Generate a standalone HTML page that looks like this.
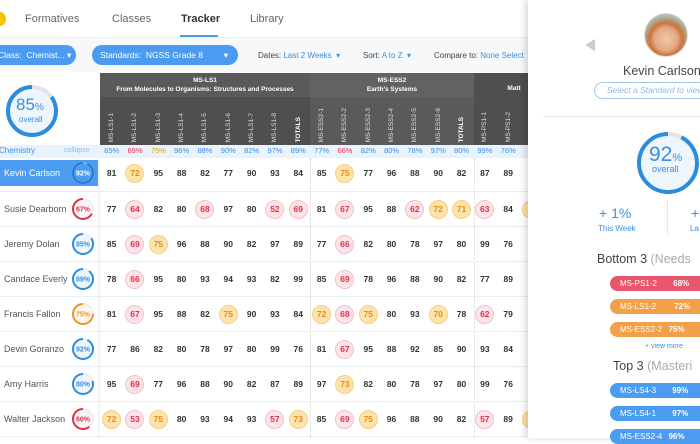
<!DOCTYPE html>
<html><head><meta charset="utf-8"><style>
*{margin:0;padding:0;box-sizing:border-box}
body{width:700px;height:438px;overflow:hidden;background:#fff;font-family:"Liberation Sans",sans-serif;position:relative;color:#333}
.a{position:absolute}
.nav span{position:absolute;top:13px;font-size:11px;color:#666}
.pill{position:absolute;top:45px;height:20px;border-radius:10px;background:#4b9cf0;color:#fff;font-size:8.5px;line-height:20px;padding-left:8px}
.ft{position:absolute;top:51px;font-size:8px;color:#444}
.ft b{font-weight:normal;color:#3a8fe0}
.row{position:absolute;left:100px;display:flex;height:20px;align-items:center}
.row i{font-style:normal;width:23.33px;text-align:center;font-size:8.5px;font-weight:bold;color:#333;display:flex;justify-content:center;align-items:center;height:20px}
.row i.r,.row i.o{width:19px;height:19px;border-radius:50%;margin:0 2.16px;font-size:8.5px}
.row i.r{background:#fde4e8;border:1.5px solid #f5bfc8;color:#e0304a}
.row i.o{background:#fde3ac;border:1.5px solid #f8cf7e;color:#ee8a18}
.pct{position:absolute;left:100px;top:146px;display:flex}
.pct i{font-style:normal;width:23.33px;text-align:center;font-size:7.5px;color:#3a8fe0}
.nm{position:absolute;left:4px;font-size:9px;color:#555}
.vl{position:absolute;top:100px;height:42px;width:23.33px;display:flex;justify-content:center;align-items:flex-end}
.vl span{writing-mode:vertical-rl;transform:rotate(180deg);font-size:6.5px;color:#ddd}
.hl{position:absolute;left:0;width:528px;height:1px;background:#e8eef5}
.bar{position:absolute;left:610px;width:100px;height:15px;border-radius:8px;color:#fff;font-size:8px;line-height:15px;padding-left:10px}
.bar b{margin-left:14px}
</style></head><body>
<!-- nav -->
<div class="a" style="left:-6px;top:12px;width:12px;height:14px;border-radius:50%;background:#f6c400"></div>
<div class="nav"><span style="left:25px">Formatives</span><span style="left:112px">Classes</span><span style="left:181px;color:#333;font-weight:bold">Tracker</span><span style="left:250px">Library</span></div>
<div class="a" style="left:180px;top:35px;width:38px;height:2px;background:#4b9cf0"></div>
<div class="a" style="left:0;top:37px;width:528px;height:1px;background:#eee"></div>
<div class="a" style="left:0;top:38px;width:528px;height:34px;background:#f7f8fa"></div>
<div class="pill" style="left:-10px;width:86px">Class: &nbsp;Chemist... ▾</div>
<div class="pill" style="left:92px;width:146px">Standards: &nbsp;NGSS Grade 8 <span style="position:absolute;right:10px">▾</span></div>
<div class="ft" style="left:258px">Dates: <b>Last 2 Weeks &nbsp;▾</b></div>
<div class="ft" style="left:363px">Sort: <b>A to Z &nbsp;▾</b></div>
<div class="ft" style="left:434px">Compare to: <b>None Select</b></div>
<!-- left big ring -->
<svg class="a" style="left:5px;top:84px" width="54" height="54"><circle cx="27" cy="27" r="24" fill="#eef5fd" stroke="#e4e4e4" stroke-width="4"/><circle cx="27" cy="27" r="24" fill="none" stroke="#2a8de0" stroke-width="4" stroke-dasharray="128 151" transform="rotate(-90 27 27) scale(1,-1) translate(0,-54)"/></svg>
<div class="a" style="left:16px;top:95px;font-size:17px;color:#3a8fe0">85<span style="font-size:10px">%</span></div>
<div class="a" style="left:19px;top:115px;font-size:8px;color:#3a8fe0">overall</div>
<!-- header -->
<div class="a" style="left:100px;top:73px;width:210px;height:72px;background:#4f4f4f"></div>
<div class="a" style="left:100px;top:73px;width:210px;height:24px;background:#5a5a5a"></div>
<div class="a" style="left:310px;top:73px;width:164px;height:72px;background:#5a5a5a"></div>
<div class="a" style="left:310px;top:73px;width:164px;height:24px;background:#626262"></div>
<div class="a" style="left:474px;top:73px;width:54px;height:72px;background:#4f4f4f"></div>
<div class="a" style="left:100px;top:76px;width:210px;text-align:center;color:#fff;font-size:6.5px;font-weight:bold;line-height:9px">MS-LS1<br>From Molecules to Organisms: Structures and Processes</div>
<div class="a" style="left:310px;top:76px;width:164px;text-align:center;color:#fff;font-size:6.5px;font-weight:bold;line-height:9px">MS-ESS2<br>Earth's Systems</div>
<div class="a" style="left:474px;top:85px;width:80px;text-align:center;color:#fff;font-size:6.5px;font-weight:bold">Matt</div>
<div class="vl" style="left:100px"><span>MS-LS1-1</span></div><div class="vl" style="left:123.3px"><span>MS-LS1-2</span></div><div class="vl" style="left:146.7px"><span>MS-LS1-3</span></div><div class="vl" style="left:170px"><span>MS-LS1-4</span></div><div class="vl" style="left:193.3px"><span>MS-LS1-5</span></div><div class="vl" style="left:216.7px"><span>MS-LS1-6</span></div><div class="vl" style="left:240px"><span>MS-LS1-7</span></div><div class="vl" style="left:263.3px"><span>MS-LS1-8</span></div><div class="vl" style="left:286.7px"><span style="font-weight:bold;color:#fff">TOTALS</span></div>
<div class="vl" style="left:310px"><span>MS-ESS2-1</span></div><div class="vl" style="left:333.3px"><span>MS-ESS2-2</span></div><div class="vl" style="left:356.7px"><span>MS-ESS2-3</span></div><div class="vl" style="left:380px"><span>MS-ESS2-4</span></div><div class="vl" style="left:403.3px"><span>MS-ESS2-5</span></div><div class="vl" style="left:426.7px"><span>MS-ESS2-6</span></div><div class="vl" style="left:450px"><span style="font-weight:bold;color:#fff">TOTALS</span></div>
<div class="vl" style="left:473.3px"><span>MS-PS1-1</span></div><div class="vl" style="left:496.7px"><span>MS-PS1-2</span></div>
<!-- pct row -->
<div class="a" style="left:0;top:145px;width:528px;height:13px;background:#e9f3fd"></div>
<div class="a" style="left:-1px;top:146px;font-size:8px;color:#3a8fe0">Chemistry</div>
<div class="a" style="left:64px;top:147px;font-size:7px;color:#8bbef0">collapse</div>
<div class="pct"><i>85%</i><i style="color:#e0304a">69%</i><i style="color:#d9a400">75%</i><i>96%</i><i>88%</i><i>90%</i><i>82%</i><i>97%</i><i>89%</i><i>77%</i><i style="color:#e0304a">66%</i><i>82%</i><i>80%</i><i>78%</i><i>97%</i><i>80%</i><i>99%</i><i>76%</i></div>
<!-- separators -->
<div class="a" style="left:310px;top:158px;height:280px;border-left:1px dotted #bcd8f2"></div>
<div class="a" style="left:474px;top:158px;height:280px;border-left:1px dotted #bcd8f2"></div>
<div class="a" style="left:98px;top:158px;width:2px;height:280px;background:#f2f4f7"></div>
<div class="hl" style="top:191px"></div><div class="hl" style="top:226px"></div><div class="hl" style="top:261px"></div><div class="hl" style="top:296px"></div><div class="hl" style="top:331px"></div><div class="hl" style="top:366px"></div><div class="hl" style="top:401px"></div><div class="hl" style="top:436px"></div>
<!-- Kevin highlight -->
<div class="a" style="left:0;top:160px;width:98px;height:26px;background:#4b9cf0"></div>
<div class="nm" style="top:168px;color:#fff">Kevin Carlson</div>
<!-- names -->
<div class="nm" style="top:204px">Susie Dearborn</div>
<div class="nm" style="top:239px">Jeremy Dolan</div>
<div class="nm" style="top:274px">Candace Everly</div>
<div class="nm" style="top:309px">Francis Fallon</div>
<div class="nm" style="top:344px">Devin Goranzo</div>
<div class="nm" style="top:379px">Amy Harris</div>
<div class="nm" style="top:414px">Walter Jackson</div>
<!-- small rings -->
<svg class="a" style="left:0;top:158px" width="98" height="280">
<g font-family="Liberation Sans" font-size="7" font-weight="bold" text-anchor="middle">
<g transform="translate(83,15)"><circle r="10" fill="#4b9cf0" stroke="#7ab6f4" stroke-width="1.5"/><circle r="10" fill="none" stroke="#2a6fc0" stroke-width="1.5" stroke-dasharray="58 63" transform="rotate(-90) scale(1,-1)"/><text y="2.5" fill="#fff">92%</text></g>
<g transform="translate(83,51)"><circle r="10" fill="#f6f6f6" stroke="#eee" stroke-width="2"/><circle r="10" fill="none" stroke="#e0304a" stroke-width="2" stroke-dasharray="42 63" transform="rotate(-90) scale(1,-1)"/><text y="2.5" fill="#e0304a">67%</text></g>
<g transform="translate(83,86)"><circle r="10" fill="#eef5fd" stroke="#eee" stroke-width="2"/><circle r="10" fill="none" stroke="#2a8de0" stroke-width="2" stroke-dasharray="53 63" transform="rotate(-90) scale(1,-1)"/><text y="2.5" fill="#3a8fe0">85%</text></g>
<g transform="translate(83,121)"><circle r="10" fill="#eef5fd" stroke="#eee" stroke-width="2"/><circle r="10" fill="none" stroke="#2a8de0" stroke-width="2" stroke-dasharray="56 63" transform="rotate(-90) scale(1,-1)"/><text y="2.5" fill="#3a8fe0">89%</text></g>
<g transform="translate(83,156)"><circle r="10" fill="#fdf6ec" stroke="#eee" stroke-width="2"/><circle r="10" fill="none" stroke="#f0922c" stroke-width="2" stroke-dasharray="47 63" transform="rotate(-90) scale(1,-1)"/><text y="2.5" fill="#f0922c">75%</text></g>
<g transform="translate(83,191)"><circle r="10" fill="#eef5fd" stroke="#eee" stroke-width="2"/><circle r="10" fill="none" stroke="#2a8de0" stroke-width="2" stroke-dasharray="58 63" transform="rotate(-90) scale(1,-1)"/><text y="2.5" fill="#3a8fe0">92%</text></g>
<g transform="translate(83,226)"><circle r="10" fill="#eef5fd" stroke="#eee" stroke-width="2"/><circle r="10" fill="none" stroke="#2a8de0" stroke-width="2" stroke-dasharray="50 63" transform="rotate(-90) scale(1,-1)"/><text y="2.5" fill="#3a8fe0">80%</text></g>
<g transform="translate(83,261)"><circle r="10" fill="#f6f6f6" stroke="#eee" stroke-width="2"/><circle r="10" fill="none" stroke="#e0304a" stroke-width="2" stroke-dasharray="38 63" transform="rotate(-90) scale(1,-1)"/><text y="2.5" fill="#e0304a">60%</text></g>
</g></svg>
<!-- data rows -->
<div class="row" style="top:163px"><i>81</i><i class="o">72</i><i>95</i><i>88</i><i>82</i><i>77</i><i>90</i><i>93</i><i>84</i><i>85</i><i class="o">75</i><i>77</i><i>96</i><i>88</i><i>90</i><i>82</i><i>87</i><i>89</i></div>
<div class="row" style="top:199px"><i>77</i><i class="r">64</i><i>82</i><i>80</i><i class="r">68</i><i>97</i><i>80</i><i class="r">52</i><i class="r">69</i><i>81</i><i class="r">67</i><i>95</i><i>88</i><i class="r">62</i><i class="o">72</i><i class="o">71</i><i class="r">63</i><i>84</i><i class="o">&nbsp;</i></div>
<div class="row" style="top:234px"><i>85</i><i class="r">69</i><i class="o">75</i><i>96</i><i>88</i><i>90</i><i>82</i><i>97</i><i>89</i><i>77</i><i class="r">66</i><i>82</i><i>80</i><i>78</i><i>97</i><i>80</i><i>99</i><i>76</i></div>
<div class="row" style="top:269px"><i>78</i><i class="r">66</i><i>95</i><i>80</i><i>93</i><i>94</i><i>93</i><i>82</i><i>99</i><i>85</i><i class="r">69</i><i>78</i><i>96</i><i>88</i><i>90</i><i>82</i><i>77</i><i>89</i></div>
<div class="row" style="top:304px"><i>81</i><i class="r">67</i><i>95</i><i>88</i><i>82</i><i class="o">75</i><i>90</i><i>93</i><i>84</i><i class="o">72</i><i class="r">68</i><i class="o">75</i><i>80</i><i>93</i><i class="o">70</i><i>78</i><i class="r">62</i><i>79</i></div>
<div class="row" style="top:339px"><i>77</i><i>86</i><i>82</i><i>80</i><i>78</i><i>97</i><i>80</i><i>99</i><i>76</i><i>81</i><i class="r">67</i><i>95</i><i>88</i><i>92</i><i>85</i><i>90</i><i>93</i><i>84</i></div>
<div class="row" style="top:374px"><i>95</i><i class="r">69</i><i>77</i><i>96</i><i>88</i><i>90</i><i>82</i><i>87</i><i>89</i><i>97</i><i class="o">73</i><i>82</i><i>80</i><i>78</i><i>97</i><i>80</i><i>99</i><i>76</i></div>
<div class="row" style="top:409px"><i class="o">72</i><i class="r">53</i><i class="o">75</i><i>80</i><i>93</i><i>94</i><i>93</i><i class="r">57</i><i class="o">73</i><i>85</i><i class="r">69</i><i class="o">75</i><i>96</i><i>88</i><i>90</i><i>82</i><i class="r">57</i><i>89</i><i class="o">&nbsp;</i></div>
<!-- side panel -->
<div class="a" style="left:528px;top:0;width:172px;height:438px;background:#fff;box-shadow:-3px 0 6px rgba(0,0,0,0.15)"></div>
<div class="a" style="left:585px;top:39px;width:0;height:0;border-top:6px solid transparent;border-bottom:6px solid transparent;border-right:10px solid #ccc"></div>
<div class="a" style="left:644px;top:13px;width:44px;height:44px;border-radius:50%;background:radial-gradient(circle at 50% 60%,#f1c7a8 0,#e3a885 35%,#c9733e 50%,#aeb8a6 70%,#cfd3ca 100%);border:1px solid #ddd"></div>
<div class="a" style="left:623px;top:64px;font-size:12.5px;color:#444;white-space:nowrap">Kevin Carlson</div>
<div class="a" style="left:594px;top:82px;width:130px;height:17px;border:1px solid #9cc8f2;border-radius:9px;font-size:8.5px;font-style:italic;color:#8bb8e8;line-height:15px;padding-left:12px;white-space:nowrap">Select a Standard to view</div>
<div class="a" style="left:543px;top:116px;width:157px;height:1px;background:#e6e6e6"></div>
<svg class="a" style="left:635px;top:130px" width="66" height="66"><circle cx="33" cy="33" r="29" fill="#eef5fd" stroke="#e4e4e4" stroke-width="4"/><circle cx="33" cy="33" r="29" fill="none" stroke="#2a8de0" stroke-width="4" stroke-dasharray="168 182" transform="rotate(-90 33 33) scale(1,-1) translate(0,-66)"/></svg>
<div class="a" style="left:649px;top:143px;font-size:21px;color:#3a8fe0">92<span style="font-size:11px">%</span></div>
<div class="a" style="left:652px;top:164px;font-size:9px;color:#3a8fe0">overall</div>
<div class="a" style="left:599px;top:205px;font-size:14px;color:#3a8fe0">+ 1%</div>
<div class="a" style="left:598px;top:224px;font-size:8px;color:#3a8fe0">This Week</div>
<div class="a" style="left:667px;top:200px;width:1px;height:34px;background:#e6e6e6"></div>
<div class="a" style="left:691px;top:205px;font-size:14px;color:#3a8fe0">+</div>
<div class="a" style="left:690px;top:224px;font-size:8px;color:#3a8fe0">La</div>
<div class="a" style="left:597px;top:252px;font-size:12.5px;color:#444;white-space:nowrap">Bottom 3 <span style="color:#aaa">(Needs</span></div>
<div class="bar" style="top:276px;background:#e9556b">MS-PS1-2 <b>68%</b></div>
<div class="bar" style="top:299px;background:#f2a04a">MS-LS1-2 <b style="margin-left:16px">72%</b></div>
<div class="bar" style="top:322px;background:#f2a04a">MS-ESS2-2 <b style="margin-left:4px">75%</b></div>
<div class="a" style="left:645px;top:343px;font-size:7px;color:#3a8fe0">+ view more</div>
<div class="a" style="left:613px;top:359px;font-size:12.5px;color:#444;white-space:nowrap">Top 3 <span style="color:#aaa">(Masteri</span></div>
<div class="bar" style="top:383px;background:#4b9cf0">MS-LS4-3 <b>99%</b></div>
<div class="bar" style="top:406px;background:#4b9cf0">MS-LS4-1 <b>97%</b></div>
<div class="bar" style="top:429px;background:#4b9cf0">MS-ESS2-4 <b style="margin-left:4px">96%</b></div>
</body></html>
